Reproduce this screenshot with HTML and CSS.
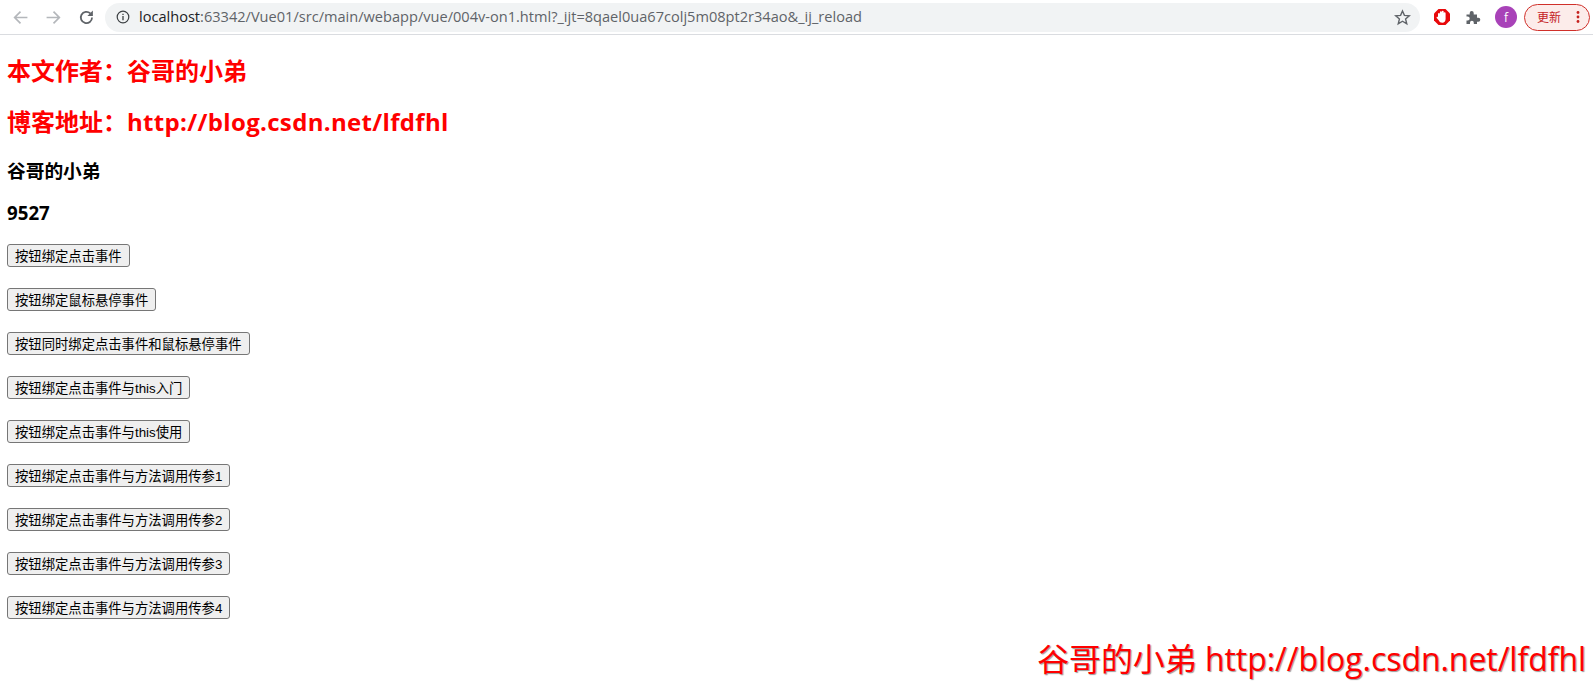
FILE: index.html
```html
<!DOCTYPE html>
<html lang="zh">
<head>
<meta charset="utf-8">
<title>004v-on1</title>
<link rel="stylesheet" href="styles.css">
</head>
<body>
<header class="toolbar">
  <div class="nav">
    <svg class="nav-icon" viewBox="0 0 16 16"><path d="M14.5 8H2.5M8 2.5 2.5 8 8 13.5" fill="none" stroke="#b4b7bb" stroke-width="1.6"/></svg>
    <svg class="nav-icon" viewBox="0 0 16 16"><path d="M1.5 8h12M8 2.5 13.5 8 8 13.5" fill="none" stroke="#b4b7bb" stroke-width="1.6"/></svg>
    <svg class="nav-icon" viewBox="0 0 16 16"><path d="M13.2 8a5.3 5.3 0 1 1-1.6-3.8" fill="none" stroke="#5f6368" stroke-width="1.7"/><path d="M14 1.500v5.200H8.800z" fill="#5f6368"/></svg>
  </div>
  <div class="omnibox">
    <svg class="info" viewBox="0 0 14 14"><circle cx="7" cy="7" r="5.800" fill="none" stroke="#3c4043" stroke-width="1.200"/><path d="M7 6v4.200M7 3.800v1.200" stroke="#3c4043" stroke-width="1.300"/></svg>
    <span class="url"><span class="host">localhost</span>:63342/Vue01/src/main/webapp/vue/004v-on1.html?_ijt=8qael0ua67colj5m08pt2r34ao&amp;_ij_reload</span>
    <svg class="star" viewBox="0 0 16 16"><path d="M8 1.800 9.800 6l4.600.4-3.500 3 1.100 4.500L8 11.500l-4 2.400 1.100-4.500-3.500-3L6.200 6z" fill="none" stroke="#5f6368" stroke-width="1.300"/></svg>
  </div>
  <div class="actions">
    <svg class="ext" viewBox="0 0 18 18"><path d="M5.500 1h7L17 5.500v7L12.500 17h-7L1 12.500v-7z" fill="#e8090b"/><path d="M5 9.200V6a.95.95 0 0 1 1.900 0V4.200a.95.95 0 0 1 1.900 0V3.700a.95.95 0 0 1 1.900 0v1.600a.95.95 0 0 1 1.900 0V11c0 2.200-1.300 3.800-3.300 3.800-1.800 0-2.700-1-3.400-2.300L3.700 10c-.5-.9.700-1.700 1.300-.8z" fill="#fff"/></svg>
    <svg class="ext" viewBox="0 0 18 18"><path d="M2.500 6.500h3.200V5a2 2 0 0 1 4 0v1.500H13v3.300h1.300a2 2 0 0 1 0 4H13V16H9.800v-1.300a1.900 1.900 0 0 0-3.800 0V16H2.500v-3.500H3.700a2 2 0 0 0 0-4H2.500z" fill="#5f6368"/></svg>
    <span class="avatar">f</span>
    <span class="update">更新<svg class="dots" viewBox="0 0 4 14"><circle cx="2" cy="2.500" r="1.400"/><circle cx="2" cy="7" r="1.400"/><circle cx="2" cy="11.500" r="1.400"/></svg></span>
  </div>
</header>
<main class="page">
  <h2 class="title">本文作者：谷哥的小弟</h2>
  <h2 class="title">博客地址：<span class="latin">http://blog.csdn.net/lfdfhl</span></h2>
  <h3 class="sub">谷哥的小弟</h3>
  <h3 class="sub">9527</h3>
  <p class="row"><button>按钮绑定点击事件</button></p>
  <p class="row"><button>按钮绑定鼠标悬停事件</button></p>
  <p class="row"><button>按钮同时绑定点击事件和鼠标悬停事件</button></p>
  <p class="row"><button>按钮绑定点击事件与this入门</button></p>
  <p class="row"><button>按钮绑定点击事件与this使用</button></p>
  <p class="row"><button>按钮绑定点击事件与方法调用传参1</button></p>
  <p class="row"><button>按钮绑定点击事件与方法调用传参2</button></p>
  <p class="row"><button>按钮绑定点击事件与方法调用传参3</button></p>
  <p class="row"><button>按钮绑定点击事件与方法调用传参4</button></p>
</main>
<div class="watermark">谷哥的小弟 http://blog.csdn.net/lfdfhl</div>
</body>
</html>
```
FILE: styles.css
```css
html, body { margin: 0; padding: 0; background: #fff; overflow: hidden; }
body { height: 688px; position: relative; font-family: "Open Sans", "Noto Sans CJK SC", sans-serif; color: #000; }
.toolbar { height: 34px; border-bottom: 1px solid #dadce0; display: flex; align-items: center; box-sizing: content-box; }
.nav { display: flex; align-items: center; gap: 16px; padding-left: 12px; width: 105px; box-sizing: border-box; flex: none; }
.nav-icon { width: 17px; height: 17px; flex: none; }
.omnibox { width: 1315px; height: 29px; background: #f1f3f4; border-radius: 15px; display: flex; align-items: center; box-sizing: border-box; padding: 0 9px 0 11px; flex: none; }
.info { width: 14px; height: 14px; flex: none; }
.url { margin: 0 0 2px 9px; flex: 1; font: 14.58px "Open Sans", "Noto Sans CJK SC", sans-serif; color: #5f6368; white-space: nowrap; }
.host { color: #202124; }
.star { width: 17px; height: 17px; flex: none; }
.actions { display: flex; align-items: center; margin-left: 13px; flex: none; }
.ext { width: 18px; height: 18px; flex: none; margin-right: 13px; }
.avatar { width: 22px; height: 22px; border-radius: 50%; background: #a842b8; color: #fff; font-size: 12px; display: flex; align-items: center; justify-content: center; margin-right: 7px; }
.update { width: 66px; height: 27px; box-sizing: border-box; border: 1px solid #d0302a; border-radius: 14px; background: #fcecea; color: #c5221f; font-size: 12px; display: flex; align-items: center; padding-left: 12px; justify-content: space-between; padding-right: 9px; }
.dots { width: 4px; height: 14px; fill: #c5221f; }
.page { padding: 0 7px; }
.title { margin: 0; font-size: 24px; font-weight: 700; color: #f00; line-height: 33px; padding: 19px 0 0; height: 51px; box-sizing: border-box; }
.latin { letter-spacing: .33px; }
.sub { margin: 0; font-size: 18.72px; font-weight: 700; line-height: 26px; }
.title + .sub { margin-top: 21px; }
.sub + .sub { margin-top: 16px; }
.row { margin: 0; height: 23px; display: flex; }
.sub + .row { margin-top: 18px; }
.row + .row { margin-top: 21px; }
button { font: 13.333px "Liberation Sans", "Noto Sans CJK SC", sans-serif; padding: 0 7px; height: 23px; border: 1px solid #767676; border-radius: 3px; background: #efefef; color: #000; white-space: nowrap; }
.watermark { position: absolute; right: 7px; top: 637px; font-size: 31.9px; line-height: 44px; color: #f00; text-shadow: 1px 1px 1px #999; white-space: nowrap; }
```
